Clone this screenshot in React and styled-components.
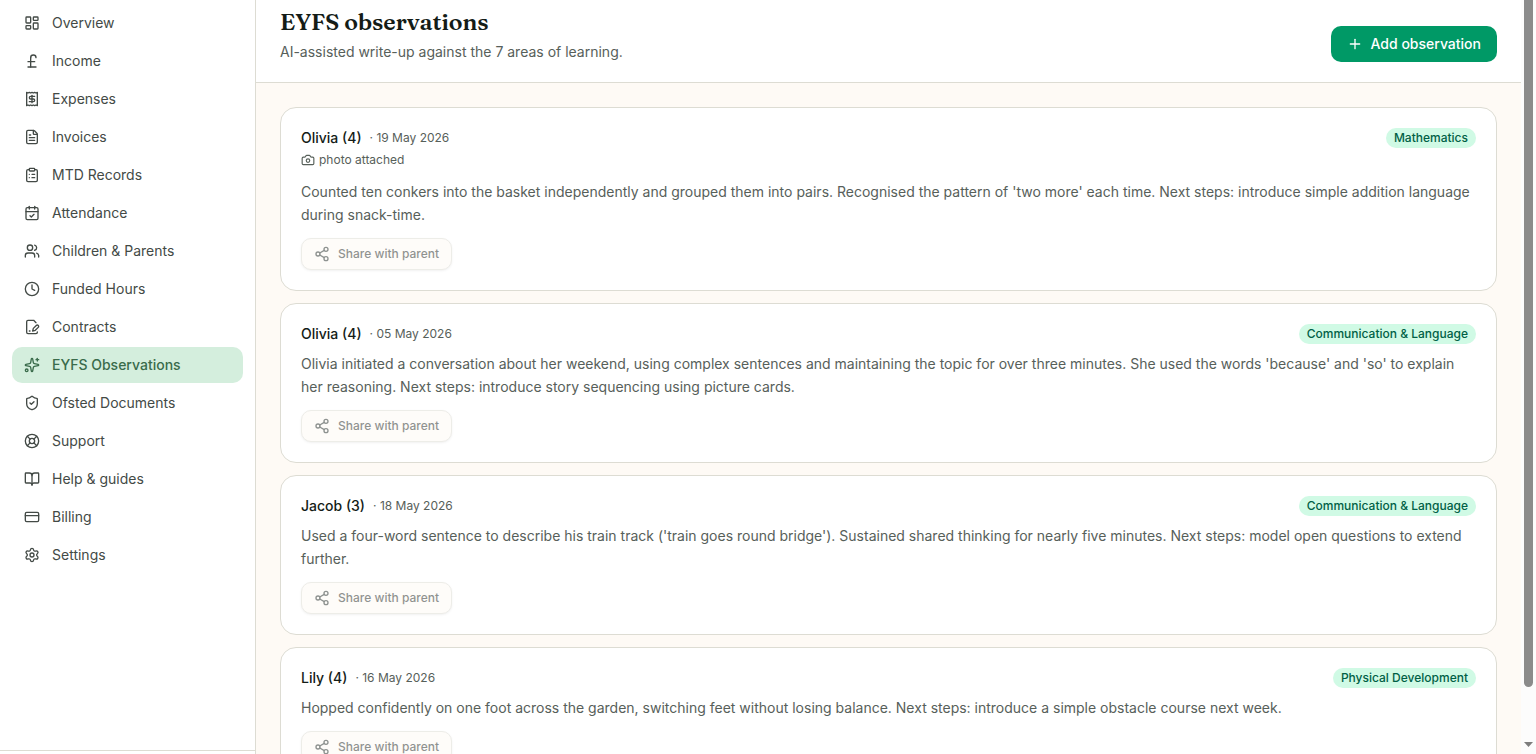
import React from "react";
import styled, { createGlobalStyle, css } from "styled-components";
import {
  LayoutDashboard, PoundSterling, Receipt, FileText, ClipboardList, CalendarCheck,
  Users, Clock, Sparkles, ShieldCheck, LifeBuoy, BookOpen, CreditCard,
  Settings, Plus, Camera, Share2,
} from "lucide-react";

const color = {
  line: "#dddcd3",
  page: "#fefaf5",
  ink: "#141c17",
  body: "#57605a",
  nav: "#434a46",
};

const GlobalStyle = createGlobalStyle`
  *, *::before, *::after { box-sizing: border-box; }
  body {
    margin: 0;
    overflow: hidden;
    font-family: Inter, "Liberation Sans", sans-serif;
    font-size: 14px;
    line-height: 20px;
    color: ${color.ink};
    background: ${color.page};
  }
  h1, h2, p, ul { margin: 0; padding: 0; }
  svg { flex-shrink: 0; display: block; }
`;

const Shell = styled.div`
  display: grid;
  grid-template-columns: 256px minmax(0, 1fr) 15px;
  height: 100vh;
  overflow: hidden;
`;

const Sidebar = styled.aside`
  display: flex;
  flex-direction: column;
  min-height: 0;
  background: #fff;
  border-right: 1px solid ${color.line};
`;

const NavList = styled.ul`
  flex: 1;
  display: flex;
  flex-direction: column;
  gap: 2px;
  padding: 5px 12px;
  list-style: none;
`;

const NavLink = styled.a`
  display: flex;
  align-items: center;
  gap: 12px;
  height: 36px;
  padding: 0 12px;
  border-radius: 10px;
  color: ${color.nav};
  text-decoration: none;
  ${(p) => p.$active && css`
    background: #d4eedd;
    color: #3a6b4b;
    font-weight: 500;
  `}
`;

const SidebarFooter = styled.div`
  height: 4px;
  border-top: 1px solid ${color.line};
`;

const Main = styled.main`
  min-height: 0;
  overflow: hidden;
`;

const PageHeader = styled.header`
  display: flex;
  align-items: flex-end;
  justify-content: space-between;
  padding: 6px 24px 20px;
  background: #fff;
  border-bottom: 1px solid ${color.line};
`;

const Title = styled.h1`
  font-family: Fraunces, "Liberation Serif", serif;
  font-size: 23px;
  line-height: 32px;
  font-weight: 600;
`;

const Subtitle = styled.p`
  margin-top: 4px;
  color: ${color.body};
`;

const PrimaryButton = styled.button`
  display: inline-flex;
  align-items: center;
  gap: 8px;
  height: 36px;
  padding: 0 16px;
  border: 0;
  border-radius: 10px;
  background: #009966;
  color: #fff;
  font: inherit;
  font-weight: 500;
`;

const CardList = styled.div`
  display: flex;
  flex-direction: column;
  gap: 12px;
  padding: 24px;
`;

const Card = styled.article`
  padding: 20px;
  background: #fff;
  border: 1px solid ${color.line};
  border-radius: 16px;
`;

const CardHead = styled.div`
  display: flex;
  align-items: flex-start;
  justify-content: space-between;
`;

const NameRow = styled.div`
  display: flex;
  align-items: center;
  gap: 8px;
`;

const ChildName = styled.h2`
  font-size: 14px;
  line-height: 20px;
  font-weight: 500;
`;

const Meta = styled.span`
  font-size: 12px;
  color: ${color.body};
`;

const PhotoNote = styled.p`
  display: flex;
  align-items: center;
  gap: 4px;
  margin: 4px 0;
  font-size: 12px;
  line-height: 16px;
  color: ${color.body};
`;

const Badge = styled.span`
  padding: 2px 8px;
  border-radius: 10px;
  background: #d0fae5;
  color: #006045;
  font-size: 12px;
  line-height: 16px;
  font-weight: 500;
`;

const Note = styled.p`
  margin-top: 8px;
  line-height: 23px;
  color: ${color.body};
`;

const ShareButton = styled.button`
  display: flex;
  align-items: center;
  gap: 8px;
  height: 32px;
  margin-top: 12px;
  padding: 0 12px;
  border: 1px solid ${color.line};
  border-radius: 10px;
  background: ${color.page};
  box-shadow: 0 1px 2px rgba(0, 0, 0, 0.1);
  color: #1f2823;
  font: inherit;
  font-size: 12px;
  font-weight: 500;
  opacity: 0.5;
`;

const ScrollTrack = styled.div`
  display: flex;
  flex-direction: column;
  align-items: center;
  justify-content: space-between;
  padding: 0 0 7px;
  background: #fcfcfc;
`;

const ScrollThumb = styled.div`
  width: 9px;
  height: 92%;
  border-radius: 0 0 5px 5px;
  background: #8b8b8b;
`;

function ContractIcon({ size }) {
  return (
    <svg
      width={size} height={size} viewBox="0 0 24 24" fill="none" stroke="currentColor"
      strokeWidth="2" strokeLinecap="round" strokeLinejoin="round" aria-hidden="true"
    >
      <path d="M20 19.5v.5a2 2 0 0 1-2 2H6a2 2 0 0 1-2-2V4a2 2 0 0 1 2-2h8.5L18 5.5" />
      <path d="M8 18h1" />
      <path d="M18.42 9.61a2.1 2.1 0 1 1 2.97 2.97L16.95 17 13 18l.99-3.95 4.43-4.44Z" />
    </svg>
  );
}

const navItems = [
  ["Overview", LayoutDashboard],
  ["Income", PoundSterling],
  ["Expenses", Receipt],
  ["Invoices", FileText],
  ["MTD Records", ClipboardList],
  ["Attendance", CalendarCheck],
  ["Children & Parents", Users],
  ["Funded Hours", Clock],
  ["Contracts", ContractIcon],
  ["EYFS Observations", Sparkles],
  ["Ofsted Documents", ShieldCheck],
  ["Support", LifeBuoy],
  ["Help & guides", BookOpen],
  ["Billing", CreditCard],
  ["Settings", Settings],
];

const observations = [
  {
    name: "Olivia (4)", date: "19 May 2026", area: "Mathematics", photo: true,
    text: "Counted ten conkers into the basket independently and grouped them into pairs. Recognised the pattern of 'two more' each time. Next steps: introduce simple addition language during snack-time.",
  },
  {
    name: "Olivia (4)", date: "05 May 2026", area: "Communication & Language",
    text: "Olivia initiated a conversation about her weekend, using complex sentences and maintaining the topic for over three minutes. She used the words 'because' and 'so' to explain her reasoning. Next steps: introduce story sequencing using picture cards.",
  },
  {
    name: "Jacob (3)", date: "18 May 2026", area: "Communication & Language",
    text: "Used a four-word sentence to describe his train track ('train goes round bridge'). Sustained shared thinking for nearly five minutes. Next steps: model open questions to extend further.",
  },
  {
    name: "Lily (4)", date: "16 May 2026", area: "Physical Development",
    text: "Hopped confidently on one foot across the garden, switching feet without losing balance. Next steps: introduce a simple obstacle course next week.",
  },
];

function Observation({ name, date, area, photo, text }) {
  return (
    <Card>
      <CardHead>
        <div>
          <NameRow>
            <ChildName>{name}</ChildName>
            <Meta>· {date}</Meta>
          </NameRow>
          {photo && (
            <PhotoNote>
              <Camera size={14} />
              photo attached
            </PhotoNote>
          )}
        </div>
        <Badge>{area}</Badge>
      </CardHead>
      <Note>{text}</Note>
      <ShareButton type="button">
        <Share2 size={16} />
        Share with parent
      </ShareButton>
    </Card>
  );
}

export default function App() {
  return (
    <>
      <GlobalStyle />
      <Shell>
        <Sidebar>
          <NavList>
            {navItems.map(([label, Icon]) => {
              const active = label === "EYFS Observations";
              return (
                <li key={label}>
                  <NavLink href="#" $active={active} aria-current={active ? "page" : undefined}>
                    <Icon size={16} />
                    {label}
                  </NavLink>
                </li>
              );
            })}
          </NavList>
          <SidebarFooter />
        </Sidebar>
        <Main>
          <PageHeader>
            <div>
              <Title>EYFS observations</Title>
              <Subtitle>AI-assisted write-up against the 7 areas of learning.</Subtitle>
            </div>
            <PrimaryButton type="button">
              <Plus size={16} />
              Add observation
            </PrimaryButton>
          </PageHeader>
          <CardList>
            {observations.map((o) => (
              <Observation key={o.name + o.date} {...o} />
            ))}
          </CardList>
        </Main>
        <ScrollTrack aria-hidden="true">
          <ScrollThumb />
          <svg width="9" height="5" viewBox="0 0 9 5">
            <path d="M0 0h9L4.500 5z" fill="#7d7d7d" />
          </svg>
        </ScrollTrack>
      </Shell>
    </>
  );
}
